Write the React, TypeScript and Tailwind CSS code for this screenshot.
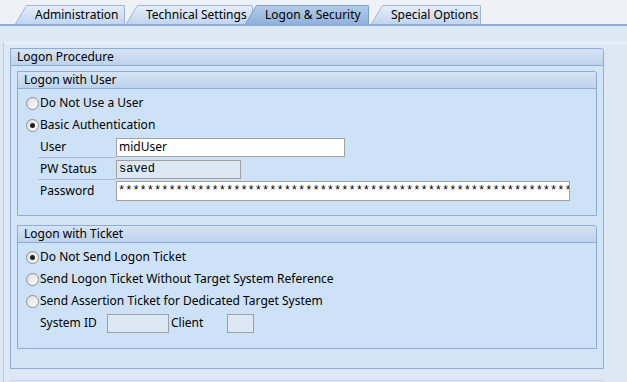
import React from 'react';

type TabProps = { label: string; active?: boolean; width: string; className?: string };

const Tab: React.FC<TabProps> = ({ label, active, width, className }) => (
  <div className={`flex h-[19px] items-stretch ${className ?? ''}`}>
    <svg width="12" height="19" viewBox="0 0 12 19" className="block shrink-0">
      <defs>
        <linearGradient id={active ? 'ta' : 'ti'} x1="0" y1="0" x2="0" y2="1">
          <stop offset="0" stopColor={active ? '#b3cbe8' : '#e6eef9'} />
          <stop offset="1" stopColor={active ? '#8fb1dc' : '#c2d5ee'} />
        </linearGradient>
      </defs>
      <path d="M0 19 L11 1 Q11.5 0 12 0 L12 19 Z" fill={`url(#${active ? 'ta' : 'ti'})`} />
      <path d="M0.5 19 L11 1.2 Q11.5 0.5 12 0.5" fill="none" stroke={active ? '#7d9fca' : '#9db6d6'} />
    </svg>
    <div
      className={`flex items-center whitespace-nowrap pl-[8px] border-t border-r rounded-tr-[2px] ${width} ${
        active
          ? 'bg-gradient-to-b from-[#b3cbe8] to-[#8fb1dc] border-[#7d9fca]'
          : 'bg-gradient-to-b from-[#e6eef9] to-[#c2d5ee] border-[#9db6d6]'
      }`}
    >
      {label}
    </div>
  </div>
);

const Radio: React.FC<{ checked?: boolean; label: string }> = ({ checked, label }) => (
  <div className="flex h-[22px] items-center">
    <span className="flex h-[13px] w-[13px] shrink-0 items-center justify-center rounded-full border border-[#8a8f96] bg-gradient-to-br from-[#dcdcdc] to-white">
      {checked && <span className="h-[5px] w-[5px] rounded-full bg-[#1e1e1e]" />}
    </span>
    <span className="ml-[1px]">{label}</span>
  </div>
);

const GroupHeader: React.FC<{ title: string; className?: string }> = ({ title, className }) => (
  <div
    className={`flex h-[17px] items-center border-b border-[#8eadd6] bg-gradient-to-b from-[#d6e4f5] to-[#bdd2eb] rounded-tr-[3px] ${className ?? ''}`}
  >
    {title}
  </div>
);

const FieldLabel: React.FC<{ text: string; line?: boolean }> = ({ text, line }) => (
  <div className={`flex h-[22px] w-[78px] items-center pl-[2px] ${line ? 'border-b border-[#a7bad1]' : ''}`}>
    {text}
  </div>
);

const stars = '*'.repeat(63);

export default function App() {
  return (
    <div className="flex h-[382px] w-[627px] flex-col overflow-hidden bg-[#eef1f6] text-[12px] leading-[16px] text-black [font-family:'Noto_Sans',Arial,sans-serif]">
      {/* tab strip */}
      <div className="flex h-[26px] shrink-0 items-end border-b-2 border-[#8eadd6] pl-[15px]">
        <Tab label="Administration" width="w-[98px]" />
        <Tab label="Technical Settings" width="w-[115px]" className="ml-[1px]" />
        <Tab label="Logon & Security" active width="w-[112px]" className="-ml-[8px] relative" />
        <Tab label="Special Options" width="w-[98px]" className="ml-[2px]" />
      </div>

      {/* content */}
      <div className="flex flex-1 flex-col bg-[#dde8f5] pl-[3px] pt-[16px]">
        <div className="flex flex-1 flex-col border-l border-t-2 border-[#b9cce5] border-t-[#e9eff8] pl-[6px] pr-[23px] pt-[4px]">
          {/* Logon Procedure */}
          <div className="flex h-[321px] flex-col rounded-tr-[3px] border border-[#8eadd6] bg-[#d3e4f6]">
            <GroupHeader title="Logon Procedure" className="pl-[6px]" />
            <div className="flex flex-col px-[6px] pt-[5px]">
              {/* Logon with User */}
              <div className="flex h-[145px] flex-col rounded-tr-[3px] border border-[#8eadd6] bg-[#cde2f6]">
                <GroupHeader title="Logon with User" className="pl-[6px]" />
                <div className="flex flex-col pl-[8px] pt-[3px]">
                  <Radio label="Do Not Use a User" />
                  <Radio checked label="Basic Authentication" />
                  <div className="flex items-center pl-[12px]">
                    <FieldLabel text="User" line />
                    <div className="flex h-[19px] w-[229px] items-center border border-[#a0a0a0] bg-white pl-[2px]">midUser</div>
                  </div>
                  <div className="flex items-center pl-[12px]">
                    <FieldLabel text="PW Status" line />
                    <div className="flex h-[19px] w-[125px] items-center border border-[#a0a0a0] bg-[#dde8f5] pl-[2px] [font-family:'Liberation_Mono','Courier_New',monospace]">
                      saved
                    </div>
                  </div>
                  <div className="flex items-center pl-[12px]">
                    <FieldLabel text="Password" />
                    <div className="flex h-[20px] w-[454px] items-center overflow-hidden whitespace-nowrap border border-[#a0a0a0] bg-white pl-[1px] [font-family:'Liberation_Mono','Courier_New',monospace]">
                      {stars}
                    </div>
                  </div>
                </div>
              </div>

              {/* Logon with Ticket */}
              <div className="mt-[9px] flex h-[124px] flex-col rounded-tr-[3px] border border-[#8eadd6] bg-[#cde2f6]">
                <GroupHeader title="Logon with Ticket" className="pl-[6px]" />
                <div className="flex flex-col pl-[8px] pt-[3px]">
                  <Radio checked label="Do Not Send Logon Ticket" />
                  <Radio label="Send Logon Ticket Without Target System Reference" />
                  <Radio label="Send Assertion Ticket for Dedicated Target System" />
                  <div className="flex h-[22px] items-center pl-[12px]">
                    <div className="w-[69px] pl-[2px]">System ID</div>
                    <div className="h-[19px] w-[62px] border border-[#a0a0a0] bg-[#dde8f5]" />
                    <div className="w-[58px] pl-[2px]">Client</div>
                    <div className="h-[19px] w-[27px] border border-[#a0a0a0] bg-[#dde8f5]" />
                  </div>
                </div>
              </div>
            </div>
          </div>
          <div className="mt-auto mb-[1px] h-[1px] bg-[#c9d8ec]" />
        </div>
      </div>
    </div>
  );
}
